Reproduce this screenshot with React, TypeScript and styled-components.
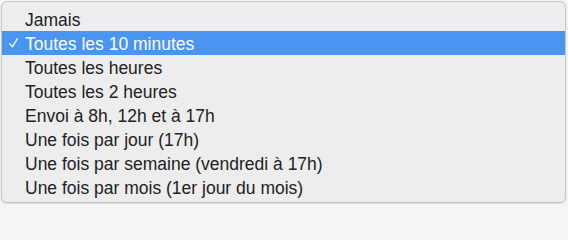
import React from "react";
import styled, { createGlobalStyle } from "styled-components";

const Global = createGlobalStyle`
  html, body { margin: 0; padding: 0; background: #f5f5f5; }
  body { width: 568px; height: 204px; overflow: hidden; }
`;

const Page = styled.div`
  padding: 1px 2px 0 1px;
  width: 568px;
  height: 204px;
  box-sizing: border-box;
`;

const Menu = styled.ul`
  list-style: none;
  margin: 0;
  box-sizing: border-box;
  width: 565px;
  height: 202px;
  padding: 5px 0 4px 0;
  background: #ededed;
  border: 1px solid #c6c6c6;
  border-radius: 6px;
  box-shadow: 0 1px 2px rgba(0, 0, 0, 0.12);
  font-family: "Liberation Sans", Arial, sans-serif;
  font-size: 17.5px;
  color: #222222;
  overflow: hidden;
`;

const Item = styled.li<{ $selected?: boolean }>`
  display: flex;
  align-items: center;
  height: 24px;
  line-height: 24px;
  padding-left: 23px;
  padding-top: 1px;
  box-sizing: border-box;
  position: relative;
  background: ${(p) => (p.$selected ? "#4a94f2" : "transparent")};
  color: ${(p) => (p.$selected ? "#ffffff" : "#222222")};
  white-space: nowrap;
`;

const Check = styled.svg`
  position: absolute;
  left: 7px;
  top: 7px;
  width: 9px;
  height: 10px;
`;

const options = [
  "Jamais",
  "Toutes les 10 minutes",
  "Toutes les heures",
  "Toutes les 2 heures",
  "Envoi à 8h, 12h et à 17h",
  "Une fois par jour (17h)",
  "Une fois par semaine (vendredi à 17h)",
  "Une fois par mois (1er jour du mois)",
];

export default function App() {
  const selected = 1;
  return (
    <>
      <Global />
      <Page>
        <Menu>
          {options.map((o, i) => (
            <Item key={o} $selected={i === selected}>
              {i === selected && (
                <Check viewBox="0 0 9 10">
                  <path d="M0.8 5.6 L3.3 8.8 L8.3 0.8" fill="none" stroke="#fff" strokeWidth="1.3" strokeLinecap="round" strokeLinejoin="round" />
                </Check>
              )}
              {o}
            </Item>
          ))}
        </Menu>
      </Page>
    </>
  );
}
